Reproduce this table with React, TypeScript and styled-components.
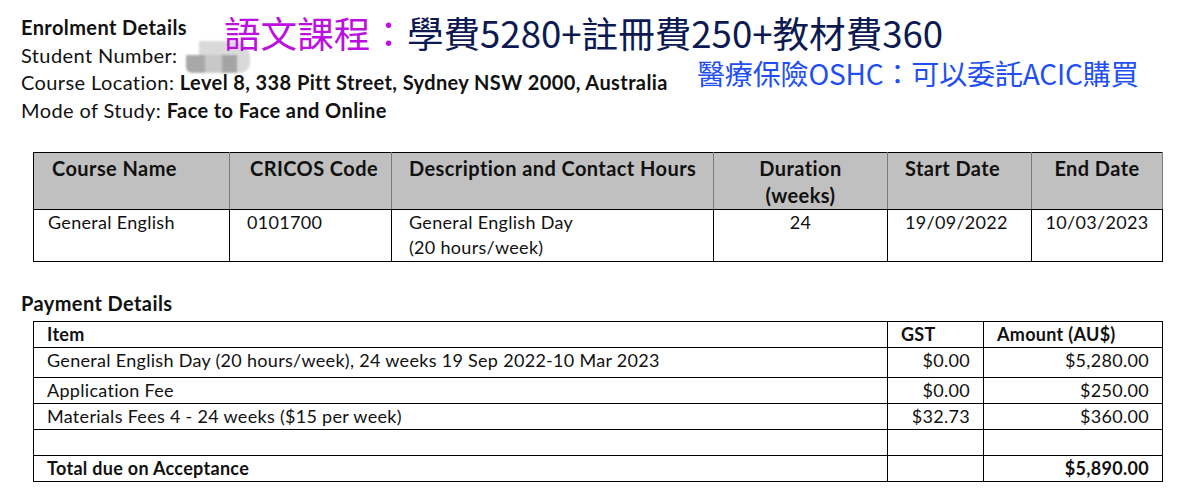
import React from "react";
import styled, { createGlobalStyle } from "styled-components";

const Global = createGlobalStyle`
  html, body { margin: 0; padding: 0; background: #ffffff; }
  body { font-family: Lato, "Open Sans", Arial, sans-serif; color: #111; }
`;

const Page = styled.div`
  position: relative;
  width: 1182px;
  height: 502px;
  overflow: hidden;
  padding: 14px 0 0 21px;
  box-sizing: border-box;
`;

const Details = styled.div`
  font-size: 20px;
  letter-spacing: 0.4px;
  line-height: 27.6px;
`;

const Line = styled.div``;

const Strong = styled.span`
  font-weight: 700;
`;

const Redact = styled.span`
  display: inline-block;
  vertical-align: middle;
  width: 64px;
  height: 32px;
  margin: -10px 0 -8px 8px;
  background-image:
    linear-gradient(90deg, #a8a8a8 0 30%, #c8c8c8 30% 56%, #a4a4a4 56% 80%, #d8d8d8 80% 100%),
    linear-gradient(90deg, transparent 0 20%, #dadada 20% 100%);
  background-size: 100% 56%, 100% 50%;
  background-position: 0 100%, 0 0;
  background-repeat: no-repeat;
  border-radius: 4px 16px 10px 6px;
  filter: blur(1px);
`;

const Overlay = styled.div`
  position: absolute;
  font-family: "Noto Sans CJK TC", "Noto Sans CJK SC", sans-serif;
  white-space: nowrap;
`;

const Title = styled(Overlay)`
  left: 224px;
  top: 8px;
  font-size: 36.6px;
  line-height: 50px;
  color: #0d1a52;
`;

const Accent = styled.span`
  color: #bd0fe0;
`;

const Note = styled(Overlay)`
  left: 697px;
  top: 53px;
  font-size: 28px;
  line-height: 40px;
  color: #1f4ff2;
  letter-spacing: -0.15px;
`;

const CourseTable = styled.table`
  margin: 28px 0 0 12px;
  border-collapse: collapse;
  table-layout: fixed;
  width: 1129px;
  font-size: 18px;
  letter-spacing: 0.3px;
`;

const HeadCell = styled.th<{ $pad?: number; $center?: boolean }>`
  background: #c0c0c0;
  font-weight: 700;
  font-size: 20px;
  letter-spacing: 0.42px;
  text-align: ${(p) => (p.$center ? "center" : "left")};
  vertical-align: top;
  padding: 2px ${(p) => (p.$center ? 0 : 4)}px 0 ${(p) => (p.$center ? 0 : p.$pad ?? 17)}px;
  line-height: 27px;
  border-top: 1px solid #000;
  border-bottom: 1px solid #000;
  border-left: 1px solid #7a7a7a;
  border-right: 1px solid #7a7a7a;
  &:first-child { border-left-color: #000; }
`;

const BodyCell = styled.td<{ $pad?: number; $center?: boolean }>`
  text-align: ${(p) => (p.$center ? "center" : "left")};
  vertical-align: top;
  padding: 0 4px 1px ${(p) => (p.$center ? 4 : p.$pad ?? 17)}px;
  line-height: 25px;
  border: 1px solid #000;
`;

const SectionTitle = styled.div`
  margin-top: 28px;
  font-size: 20px;
  letter-spacing: 0.4px;
  line-height: 26px;
  font-weight: 700;
`;

const PayTable = styled.table`
  margin: 5px 0 0 12px;
  border-collapse: collapse;
  table-layout: fixed;
  width: 1129px;
  font-size: 18px;
  letter-spacing: 0.3px;
`;

const PayCell = styled.td<{ $right?: boolean; $bold?: boolean; $tall?: boolean; $soft?: boolean }>`
  text-align: ${(p) => (p.$right ? "right" : "left")};
  font-weight: ${(p) => (p.$bold ? 700 : 400)};
  vertical-align: top;
  height: ${(p) => (p.$tall ? 29 : 25)}px;
  padding: 0 13px;
  line-height: 25px;
  border: 1px solid #000;
  ${(p) => (p.$soft ? "border-left-color: #8a8a8a;" : "")}
`;

const courseCols = [196, 162, 322, 174, 144, 131];
const payCols = [854, 96, 179];

const payRows = [
  { item: "General English Day (20 hours/week), 24 weeks 19 Sep 2022-10 Mar 2023", gst: "$0.00", amt: "$5,280.00", tall: true },
  { item: "Application Fee", gst: "$0.00", amt: "$250.00" },
  { item: "Materials Fees 4 - 24 weeks ($15 per week)", gst: "$32.73", amt: "$360.00" },
  { item: "", gst: "", amt: "" },
];

export default function App() {
  return (
    <>
      <Global />
      <Page>
        <Details>
          <Line><Strong>Enrolment Details</Strong></Line>
          <Line>Student Number:<Redact /></Line>
          <Line>Course Location: <Strong>Level 8, 338 Pitt Street, Sydney NSW 2000, Australia</Strong></Line>
          <Line>Mode of Study: <Strong>Face to Face and Online</Strong></Line>
        </Details>

        <CourseTable>
          <colgroup>
            {courseCols.map((w, i) => <col key={i} style={{ width: w }} />)}
          </colgroup>
          <thead>
            <tr>
              <HeadCell $pad={18}>Course Name</HeadCell>
              <HeadCell $pad={20}>CRICOS Code</HeadCell>
              <HeadCell $pad={17}>Description and Contact Hours</HeadCell>
              <HeadCell $center>Duration<br />(weeks)</HeadCell>
              <HeadCell $pad={17}>Start Date</HeadCell>
              <HeadCell $center>End Date</HeadCell>
            </tr>
          </thead>
          <tbody>
            <tr>
              <BodyCell $pad={14}>General English</BodyCell>
              <BodyCell $pad={17}>0101700</BodyCell>
              <BodyCell $pad={17}>General English Day<br />(20 hours/week)</BodyCell>
              <BodyCell $center>24</BodyCell>
              <BodyCell $pad={17}>19/09/2022</BodyCell>
              <BodyCell $center>10/03/2023</BodyCell>
            </tr>
          </tbody>
        </CourseTable>

        <SectionTitle>Payment Details</SectionTitle>
        <PayTable>
          <colgroup>
            {payCols.map((w, i) => <col key={i} style={{ width: w }} />)}
          </colgroup>
          <tbody>
            <tr>
              <PayCell $bold>Item</PayCell>
              <PayCell $bold $soft>GST</PayCell>
              <PayCell $bold>Amount (AU$)</PayCell>
            </tr>
            {payRows.map((r, i) => (
              <tr key={i}>
                <PayCell $tall={r.tall}>{r.item}</PayCell>
                <PayCell $right $soft $tall={r.tall}>{r.gst}</PayCell>
                <PayCell $right $tall={r.tall}>{r.amt}</PayCell>
              </tr>
            ))}
            <tr>
              <PayCell $bold>Total due on Acceptance</PayCell>
              <PayCell $right></PayCell>
              <PayCell $right $bold>$5,890.00</PayCell>
            </tr>
          </tbody>
        </PayTable>

        <Title><Accent>語文課程：</Accent>學費5280+註冊費250+教材費360</Title>
        <Note>醫療保險OSHC：可以委託ACIC購買</Note>
      </Page>
    </>
  );
}
